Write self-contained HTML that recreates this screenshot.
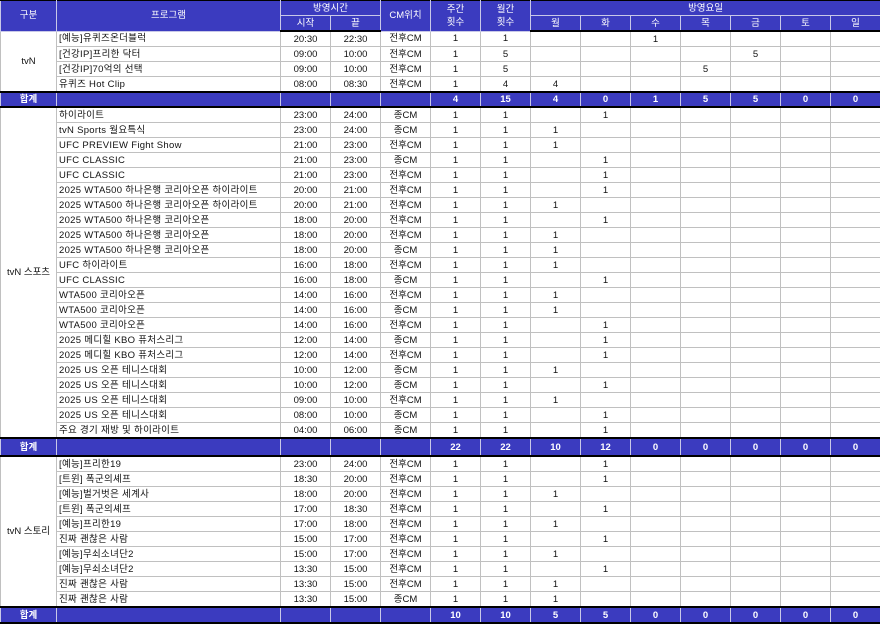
<!DOCTYPE html>
<html><head><meta charset="utf-8"><style>
body{margin:0;width:880px;height:622px;overflow:hidden;background:#fff;font-family:"Liberation Sans","Noto Sans CJK KR","NanumGothic",sans-serif;}
table{border-collapse:collapse;table-layout:fixed;width:880px;font-size:9.5px;color:#111;}
td,th{border:1px solid #c0c0c0;padding:0;height:14px;line-height:13px;text-align:center;white-space:nowrap;overflow:hidden;}
th{background:#3b3bbf;color:#fff;font-weight:normal;border-color:#c8c8e8;}
td.p{text-align:left;padding-left:2px;letter-spacing:0.3px;}
tr.s td{background:#3b3bbf;color:#fff;font-weight:bold;height:13px;line-height:13px;border-top:2px solid #000;border-bottom:2px solid #000;border-left-color:#c8c8e8;border-right-color:#c8c8e8;}
tr.h1 th{height:14px;line-height:13px;border-top:1px solid #000}
tr.h2 th{height:14px;line-height:13px;border-bottom:2px solid #000}
</style></head><body>
<table>
<colgroup><col style="width:56px"><col style="width:224px"><col span="12" style="width:50px"></colgroup>
<tr class="h1"><th rowspan="2">구분</th><th rowspan="2">프로그램</th><th colspan="2">방영시간</th><th rowspan="2">CM위치</th><th rowspan="2">주간<br>횟수</th><th rowspan="2">월간<br>횟수</th><th colspan="7">방영요일</th></tr>
<tr class="h2"><th>시작</th><th>끝</th><th>월</th><th>화</th><th>수</th><th>목</th><th>금</th><th>토</th><th>일</th></tr>
<tr><td rowspan="4">tvN</td><td class="p">[예능]유퀴즈온더블럭</td><td>20:30</td><td>22:30</td><td>전후CM</td><td>1</td><td>1</td><td></td><td></td><td>1</td><td></td><td></td><td></td><td></td></tr>
<tr><td class="p">[건강IP]프리한 닥터</td><td>09:00</td><td>10:00</td><td>전후CM</td><td>1</td><td>5</td><td></td><td></td><td></td><td></td><td>5</td><td></td><td></td></tr>
<tr><td class="p">[건강IP]70억의 선택</td><td>09:00</td><td>10:00</td><td>전후CM</td><td>1</td><td>5</td><td></td><td></td><td></td><td>5</td><td></td><td></td><td></td></tr>
<tr><td class="p">유퀴즈 Hot Clip</td><td>08:00</td><td>08:30</td><td>전후CM</td><td>1</td><td>4</td><td>4</td><td></td><td></td><td></td><td></td><td></td><td></td></tr>
<tr class="s"><td>합계</td><td></td><td></td><td></td><td></td><td>4</td><td>15</td><td>4</td><td>0</td><td>1</td><td>5</td><td>5</td><td>0</td><td>0</td></tr>
<tr><td rowspan="22">tvN 스포츠</td><td class="p">하이라이트</td><td>23:00</td><td>24:00</td><td>종CM</td><td>1</td><td>1</td><td></td><td>1</td><td></td><td></td><td></td><td></td><td></td></tr>
<tr><td class="p">tvN Sports 월요특식</td><td>23:00</td><td>24:00</td><td>종CM</td><td>1</td><td>1</td><td>1</td><td></td><td></td><td></td><td></td><td></td><td></td></tr>
<tr><td class="p">UFC PREVIEW Fight Show</td><td>21:00</td><td>23:00</td><td>전후CM</td><td>1</td><td>1</td><td>1</td><td></td><td></td><td></td><td></td><td></td><td></td></tr>
<tr><td class="p">UFC CLASSIC</td><td>21:00</td><td>23:00</td><td>종CM</td><td>1</td><td>1</td><td></td><td>1</td><td></td><td></td><td></td><td></td><td></td></tr>
<tr><td class="p">UFC CLASSIC</td><td>21:00</td><td>23:00</td><td>전후CM</td><td>1</td><td>1</td><td></td><td>1</td><td></td><td></td><td></td><td></td><td></td></tr>
<tr><td class="p">2025 WTA500 하나은행 코리아오픈 하이라이트</td><td>20:00</td><td>21:00</td><td>전후CM</td><td>1</td><td>1</td><td></td><td>1</td><td></td><td></td><td></td><td></td><td></td></tr>
<tr><td class="p">2025 WTA500 하나은행 코리아오픈 하이라이트</td><td>20:00</td><td>21:00</td><td>전후CM</td><td>1</td><td>1</td><td>1</td><td></td><td></td><td></td><td></td><td></td><td></td></tr>
<tr><td class="p">2025 WTA500 하나은행 코리아오픈</td><td>18:00</td><td>20:00</td><td>전후CM</td><td>1</td><td>1</td><td></td><td>1</td><td></td><td></td><td></td><td></td><td></td></tr>
<tr><td class="p">2025 WTA500 하나은행 코리아오픈</td><td>18:00</td><td>20:00</td><td>전후CM</td><td>1</td><td>1</td><td>1</td><td></td><td></td><td></td><td></td><td></td><td></td></tr>
<tr><td class="p">2025 WTA500 하나은행 코리아오픈</td><td>18:00</td><td>20:00</td><td>종CM</td><td>1</td><td>1</td><td>1</td><td></td><td></td><td></td><td></td><td></td><td></td></tr>
<tr><td class="p">UFC 하이라이트</td><td>16:00</td><td>18:00</td><td>전후CM</td><td>1</td><td>1</td><td>1</td><td></td><td></td><td></td><td></td><td></td><td></td></tr>
<tr><td class="p">UFC CLASSIC</td><td>16:00</td><td>18:00</td><td>종CM</td><td>1</td><td>1</td><td></td><td>1</td><td></td><td></td><td></td><td></td><td></td></tr>
<tr><td class="p">WTA500 코리아오픈</td><td>14:00</td><td>16:00</td><td>전후CM</td><td>1</td><td>1</td><td>1</td><td></td><td></td><td></td><td></td><td></td><td></td></tr>
<tr><td class="p">WTA500 코리아오픈</td><td>14:00</td><td>16:00</td><td>종CM</td><td>1</td><td>1</td><td>1</td><td></td><td></td><td></td><td></td><td></td><td></td></tr>
<tr><td class="p">WTA500 코리아오픈</td><td>14:00</td><td>16:00</td><td>전후CM</td><td>1</td><td>1</td><td></td><td>1</td><td></td><td></td><td></td><td></td><td></td></tr>
<tr><td class="p">2025 메디힐 KBO 퓨처스리그</td><td>12:00</td><td>14:00</td><td>종CM</td><td>1</td><td>1</td><td></td><td>1</td><td></td><td></td><td></td><td></td><td></td></tr>
<tr><td class="p">2025 메디힐 KBO 퓨처스리그</td><td>12:00</td><td>14:00</td><td>전후CM</td><td>1</td><td>1</td><td></td><td>1</td><td></td><td></td><td></td><td></td><td></td></tr>
<tr><td class="p">2025 US 오픈 테니스대회</td><td>10:00</td><td>12:00</td><td>종CM</td><td>1</td><td>1</td><td>1</td><td></td><td></td><td></td><td></td><td></td><td></td></tr>
<tr><td class="p">2025 US 오픈 테니스대회</td><td>10:00</td><td>12:00</td><td>종CM</td><td>1</td><td>1</td><td></td><td>1</td><td></td><td></td><td></td><td></td><td></td></tr>
<tr><td class="p">2025 US 오픈 테니스대회</td><td>09:00</td><td>10:00</td><td>전후CM</td><td>1</td><td>1</td><td>1</td><td></td><td></td><td></td><td></td><td></td><td></td></tr>
<tr><td class="p">2025 US 오픈 테니스대회</td><td>08:00</td><td>10:00</td><td>종CM</td><td>1</td><td>1</td><td></td><td>1</td><td></td><td></td><td></td><td></td><td></td></tr>
<tr><td class="p">주요 경기 재방 및 하이라이트</td><td>04:00</td><td>06:00</td><td>종CM</td><td>1</td><td>1</td><td></td><td>1</td><td></td><td></td><td></td><td></td><td></td></tr>
<tr class="s"><td style="height:16px">합계</td><td></td><td></td><td></td><td></td><td>22</td><td>22</td><td>10</td><td>12</td><td>0</td><td>0</td><td>0</td><td>0</td><td>0</td></tr>
<tr><td rowspan="10">tvN 스토리</td><td class="p">[예능]프리한19</td><td>23:00</td><td>24:00</td><td>전후CM</td><td>1</td><td>1</td><td></td><td>1</td><td></td><td></td><td></td><td></td><td></td></tr>
<tr><td class="p">[트윈] 폭군의셰프</td><td>18:30</td><td>20:00</td><td>전후CM</td><td>1</td><td>1</td><td></td><td>1</td><td></td><td></td><td></td><td></td><td></td></tr>
<tr><td class="p">[예능]벌거벗은 세계사</td><td>18:00</td><td>20:00</td><td>전후CM</td><td>1</td><td>1</td><td>1</td><td></td><td></td><td></td><td></td><td></td><td></td></tr>
<tr><td class="p">[트윈] 폭군의셰프</td><td>17:00</td><td>18:30</td><td>전후CM</td><td>1</td><td>1</td><td></td><td>1</td><td></td><td></td><td></td><td></td><td></td></tr>
<tr><td class="p">[예능]프리한19</td><td>17:00</td><td>18:00</td><td>전후CM</td><td>1</td><td>1</td><td>1</td><td></td><td></td><td></td><td></td><td></td><td></td></tr>
<tr><td class="p">진짜 괜찮은 사람</td><td>15:00</td><td>17:00</td><td>전후CM</td><td>1</td><td>1</td><td></td><td>1</td><td></td><td></td><td></td><td></td><td></td></tr>
<tr><td class="p">[예능]무쇠소녀단2</td><td>15:00</td><td>17:00</td><td>전후CM</td><td>1</td><td>1</td><td>1</td><td></td><td></td><td></td><td></td><td></td><td></td></tr>
<tr><td class="p">[예능]무쇠소녀단2</td><td>13:30</td><td>15:00</td><td>전후CM</td><td>1</td><td>1</td><td></td><td>1</td><td></td><td></td><td></td><td></td><td></td></tr>
<tr><td class="p">진짜 괜찮은 사람</td><td>13:30</td><td>15:00</td><td>전후CM</td><td>1</td><td>1</td><td>1</td><td></td><td></td><td></td><td></td><td></td><td></td></tr>
<tr><td class="p">진짜 괜찮은 사람</td><td>13:30</td><td>15:00</td><td>종CM</td><td>1</td><td>1</td><td>1</td><td></td><td></td><td></td><td></td><td></td><td></td></tr>
<tr class="s"><td style="height:14px">합계</td><td></td><td></td><td></td><td></td><td>10</td><td>10</td><td>5</td><td>5</td><td>0</td><td>0</td><td>0</td><td>0</td><td>0</td></tr>
</table>
</body></html>
